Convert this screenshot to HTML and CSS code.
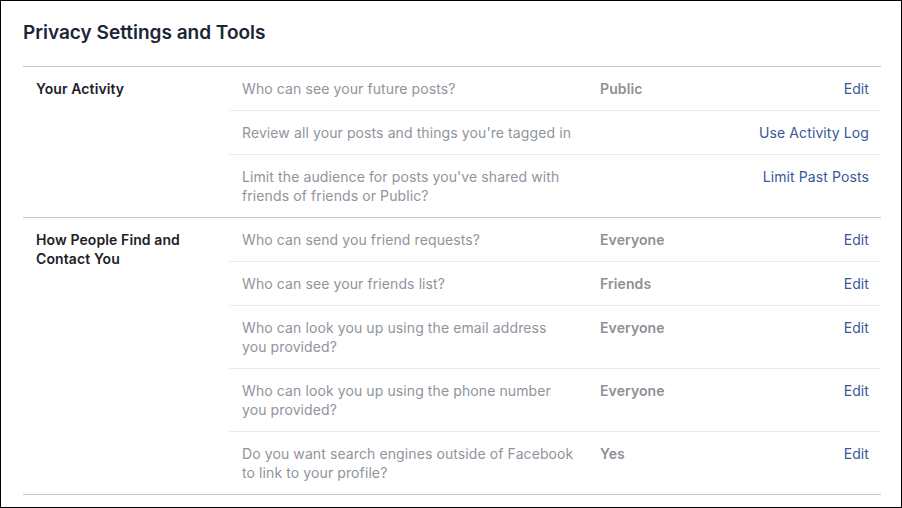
FILE: index.html
```html
<!DOCTYPE html>
<html lang="en">
<head>
    <meta charset="UTF-8">
    <meta name="viewport" content="width=device-width, initial-scale=1.0">
    <title>Privacy Settings and Tools</title>
    <link rel="stylesheet" href="styles.css">
</head>
<body>
    <div class="frame">
        <h1>Privacy Settings and Tools</h1>

        <!-- Your Activity -->
        <div class="section">
            <div class="label">Your Activity</div>
            <div class="rows">
                <div class="row">
                    <div class="question">Who can see your future posts?</div>
                    <div class="value">Public</div>
                    <a class="action" href="#">Edit</a>
                </div>
                <div class="row">
                    <div class="question wide">Review all your posts and things you're tagged in</div>
                    <div class="value"></div>
                    <a class="action" href="#">Use Activity Log</a>
                </div>
                <div class="row">
                    <div class="question">Limit the audience for posts you've shared with friends of friends or Public?</div>
                    <div class="value"></div>
                    <a class="action" href="#">Limit Past Posts</a>
                </div>
            </div>
        </div>

        <!-- How People Find and Contact You -->
        <div class="section">
            <div class="label">How People Find and Contact You</div>
            <div class="rows">
                <div class="row">
                    <div class="question">Who can send you friend requests?</div>
                    <div class="value">Everyone</div>
                    <a class="action" href="#">Edit</a>
                </div>
                <div class="row">
                    <div class="question">Who can see your friends list?</div>
                    <div class="value">Friends</div>
                    <a class="action" href="#">Edit</a>
                </div>
                <div class="row">
                    <div class="question">Who can look you up using the email address you provided?</div>
                    <div class="value">Everyone</div>
                    <a class="action" href="#">Edit</a>
                </div>
                <div class="row">
                    <div class="question">Who can look you up using the phone number you provided?</div>
                    <div class="value">Everyone</div>
                    <a class="action" href="#">Edit</a>
                </div>
                <div class="row">
                    <div class="question">Do you want search engines outside of Facebook to link to your profile?</div>
                    <div class="value">Yes</div>
                    <a class="action" href="#">Edit</a>
                </div>
            </div>
        </div>
    </div>
</body>
</html>
```

FILE: styles.css
```css
body {
    margin: 0;
    padding: 0;
    background-color: #fff;
    font-family: Inter, "Liberation Sans", Arial, sans-serif;
    font-size: 14px;
    line-height: 19px;
    letter-spacing: 0.1px;
}
.frame {
    box-sizing: border-box;
    width: 902px;
    height: 508px;
    border: 1px solid #000;
    padding: 0 20px 0 22px;
    overflow: hidden;
}
h1 {
    margin: 0;
    padding: 20px 0 21px;
    font-size: 19px;
    line-height: 24px;
    font-weight: 600;
    letter-spacing: 0;
    color: #1c2438;
}
.section {
    display: grid;
    grid-template-columns: 206px 1fr;
    border-top: 1px solid #c6c7c9;
}
.section:last-child {
    border-bottom: 1px solid #c6c7c9;
}
.label {
    padding: 12px 13px;
    font-weight: 600;
    color: #1d2129;
    max-width: 160px;
}
.row {
    display: grid;
    grid-template-columns: 358px 1fr auto;
    padding: 12px 12px 12px 13px;
    border-top: 1px solid #e9ebee;
}
.row:first-child {
    border-top: none;
}
.question {
    color: #90949c;
    max-width: 333px;
}
.question.wide {
    max-width: none;
}
.value {
    color: #8d9096;
    font-weight: 600;
}
.action {
    color: #385898;
    text-decoration: none;
}
```
